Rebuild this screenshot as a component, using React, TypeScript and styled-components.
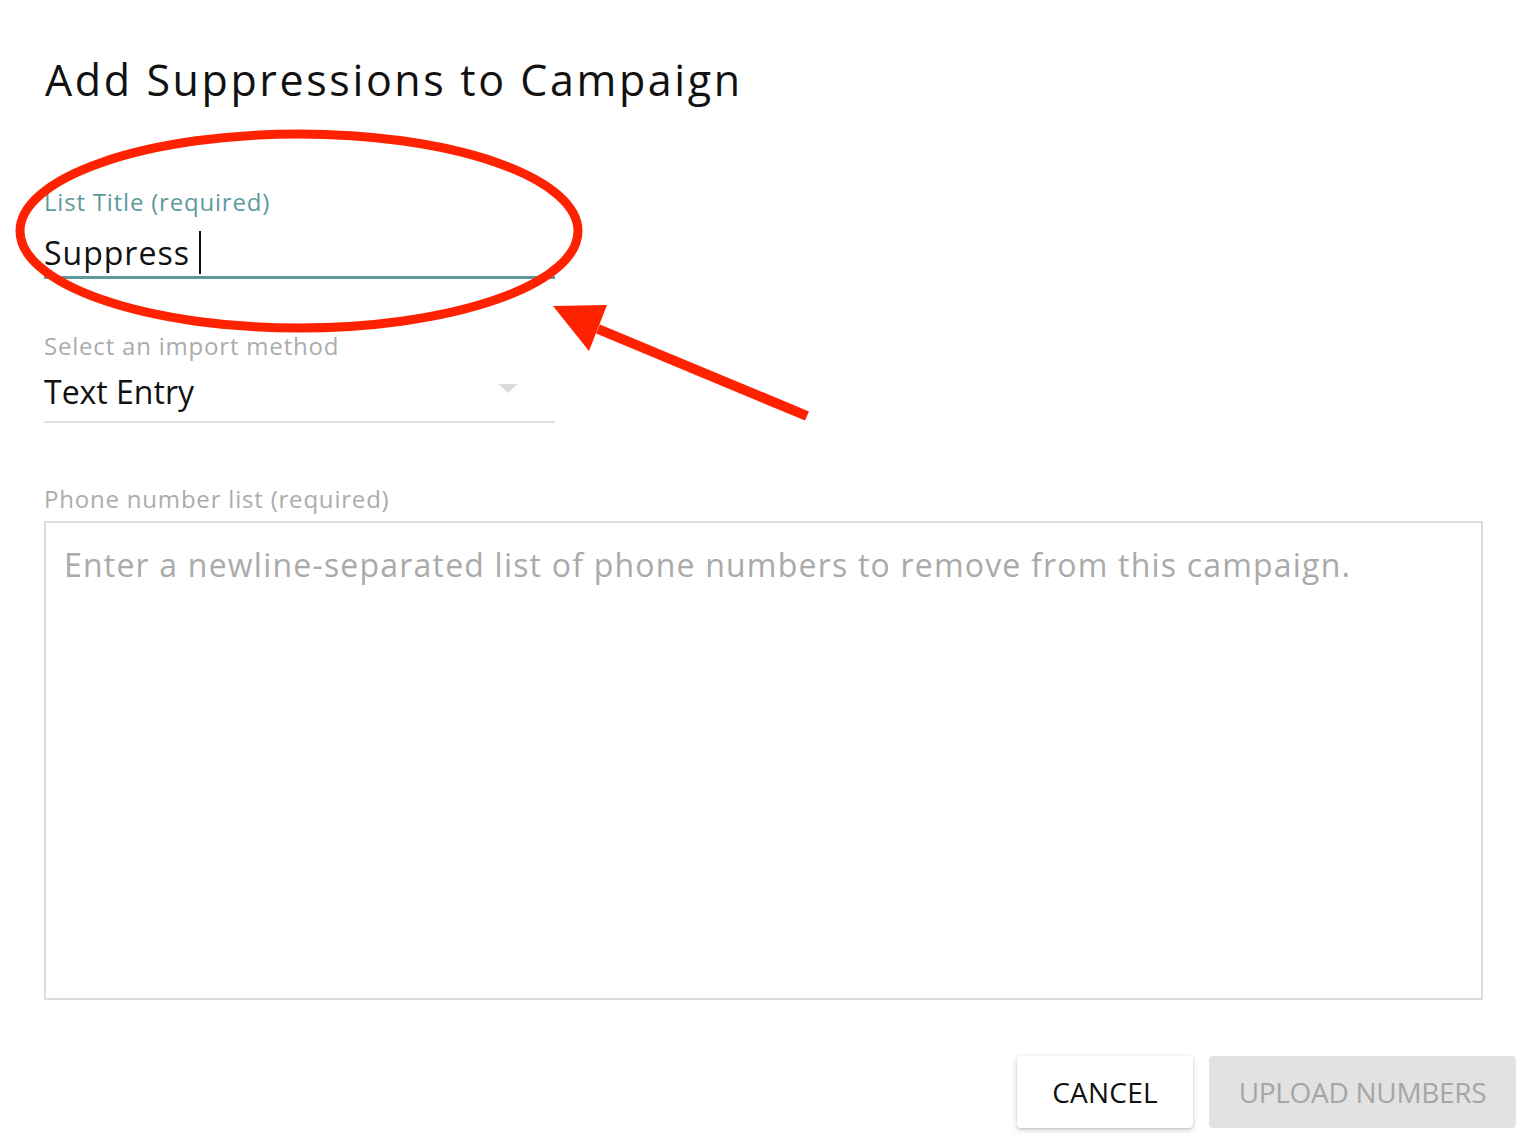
import React from 'react';
import styled, { createGlobalStyle } from 'styled-components';

const GlobalStyle = createGlobalStyle`
  html, body {
    margin: 0;
    padding: 0;
    background: #ffffff;
  }
  body {
    font-family: 'Open Sans', 'Noto Sans', sans-serif;
    color: #111;
  }
  * {
    box-sizing: border-box;
  }
`;

const Page = styled.div`
  position: relative;
  width: 1532px;
  height: 1142px;
  overflow: hidden;
  background: #fff;
`;

const Content = styled.div`
  display: flex;
  flex-direction: column;
  padding: 54px 49px 0 44px;
`;

const Title = styled.h2`
  margin: 0 0 0 1px;
  font-size: 43px;
  line-height: 52px;
  font-weight: 400;
  letter-spacing: 2.6px;
  color: #111;
`;

const Field = styled.div<{ $top: number; $width?: string }>`
  display: flex;
  flex-direction: column;
  margin-top: ${(p) => p.$top}px;
  width: ${(p) => p.$width || '100%'};
`;

const Label = styled.label<{ $active?: boolean }>`
  font-size: 24px;
  line-height: 30px;
  letter-spacing: 0.8px;
  color: ${(p) => (p.$active ? '#5e9a9c' : '#acacac')};
`;

const InputRow = styled.div<{ $focused?: boolean }>`
  position: relative;
  display: flex;
  align-items: center;
  height: 62px;
  padding-top: ${(p) => (p.$focused ? '12px' : '2px')};
  border-bottom: ${(p) => (p.$focused ? '3px solid #5e9a9c' : '2px solid #e0e0e0')};
`;

const InputText = styled.span<{ $spacing?: number }>`
  font-size: 32px;
  line-height: 40px;
  letter-spacing: ${(p) => p.$spacing ?? 0}px;
  color: #111;
`;

const Caret = styled.span`
  display: inline-block;
  width: 2px;
  height: 43px;
  margin-left: 9px;
  background: #111;
`;

const DropArrow = styled.span`
  position: absolute;
  right: 37px;
  top: 23px;
  width: 0;
  height: 0;
  border-left: 10px solid transparent;
  border-right: 10px solid transparent;
  border-top: 9px solid #dcdcdc;
`;

const TextArea = styled.div`
  margin-top: 7px;
  height: 479px;
  border: 2px solid #dddddd;
  padding: 22px 18px;
  font-size: 32px;
  line-height: 40px;
  letter-spacing: 1.2px;
  color: #aaaaaa;
`;

const Actions = styled.div`
  display: flex;
  justify-content: flex-end;
  gap: 16px;
  padding: 56px 16px 0 0;
`;

const Button = styled.button<{ $disabled?: boolean; $width: number }>`
  width: ${(p) => p.$width}px;
  height: 72px;
  padding: 0;
  border: none;
  border-radius: 4px;
  font-family: inherit;
  font-size: 28px;
  letter-spacing: ${(p) => (p.$disabled ? '-0.3px' : '0.2px')};
  background: ${(p) => (p.$disabled ? '#e2e2e2' : '#ffffff')};
  color: ${(p) => (p.$disabled ? '#a6a6a6' : '#111')};
  box-shadow: ${(p) =>
    p.$disabled ? 'none' : '0 2px 6px rgba(0,0,0,0.18), 0 1px 2px rgba(0,0,0,0.12)'};
`;

const Annotation = styled.svg`
  position: absolute;
  left: 0;
  top: 0;
  pointer-events: none;
`;

export default function App() {
  return (
    <Page>
      <GlobalStyle />
      <Content>
        <Title>Add Suppressions to Campaign</Title>
        <Field $top={81} $width="511px">
          <Label $active>List Title (required)</Label>
          <InputRow $focused>
            <InputText $spacing={1}>Suppress</InputText>
            <Caret />
          </InputRow>
        </Field>
        <Field $top={52} $width="511px">
          <Label>Select an import method</Label>
          <InputRow>
            <InputText>Text Entry</InputText>
            <DropArrow />
          </InputRow>
        </Field>
        <Field $top={61}>
          <Label>Phone number list (required)</Label>
          <TextArea>
            Enter a newline-separated list of phone numbers to remove from this campaign.
          </TextArea>
        </Field>
      </Content>
      <Actions>
        <Button $width={176}>CANCEL</Button>
        <Button $width={307} $disabled>UPLOAD NUMBERS</Button>
      </Actions>
      <Annotation width="1532" height="1142" viewBox="0 0 1532 1142">
        <ellipse cx="299" cy="231" rx="279" ry="97" fill="none" stroke="#ff2200" strokeWidth="9" />
        <line x1="598" y1="329" x2="807" y2="416" stroke="#ff2200" strokeWidth="10" />
        <polygon points="553,306 607,305 589,351" fill="#ff2200" />
      </Annotation>
    </Page>
  );
}
